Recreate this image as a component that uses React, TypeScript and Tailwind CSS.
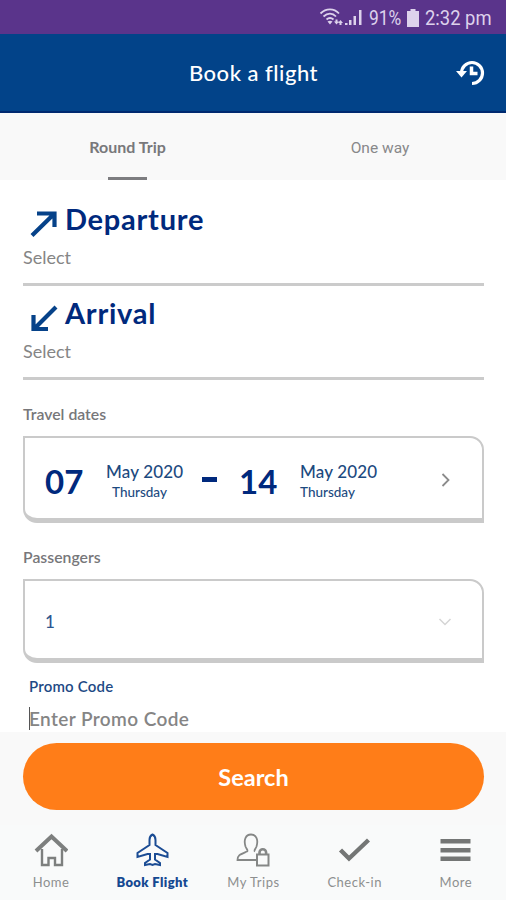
import type { ReactNode } from "react";
import clsx from "clsx";

const StatusBar = () => (
  <div className="flex h-[34px] shrink-0 items-center bg-[#5a348b] pt-px pl-[319px] font-['Roboto'] text-[20px] text-[#ddd2ec]">
    <svg width="44" height="22" viewBox="0 0 44 22" fill="none" className="shrink-0">
      <g stroke="currentColor" strokeWidth="1.8">
        <path d="M1.500 6.500C7 1 15 1 20 6.500" />
        <path d="M4.500 9.500C8.500 5.700 13.500 5.700 17 9.500" />
        <path d="M7.500 12.500C10 10.400 12 10.400 14.500 12.500" />
      </g>
      <path d="M11 17.500L8.500 14.500Q11 12.800 13.500 14.500Z" fill="currentColor" />
      <path d="M16.500 12.500h2v2h1.500l-2.500 3-2.500-3h1.500zM20.500 18v-2H19l2.500-3 2.500 3h-1.500v2z" fill="currentColor" />
      <path d="M26 16h2.500v2H26zM30 13h2.500v5H30zM34.500 9H37v9h-2.500zM40 3h2.500v15H40z" fill="currentColor" />
    </svg>
    <span className="ml-[6px] w-[33px] origin-left scale-x-[0.87] whitespace-nowrap">91%</span>
    <svg width="12" height="18" viewBox="0 0 12 18" fill="currentColor" className="ml-[5px] shrink-0">
      <path d="M3.500 0h5v2H12v16H0V2h3.500z" />
    </svg>
    <span className="ml-[6px] origin-left scale-x-[0.92] whitespace-nowrap">2:32 pm</span>
  </div>
);

const Header = () => (
  <header className="flex h-[79px] shrink-0 items-center border-b-2 border-[#002a70] bg-[#024389] text-white">
    <div className="w-[70px]" />
    <h1 className="flex-1 pl-px text-center text-[22px] font-medium tracking-[0.5px]">Book a flight</h1>
    <div className="w-[70px] pl-[20px]">
      <svg width="30" height="26" viewBox="0 0 30 26" fill="none" stroke="currentColor">
        <path d="M5.500 13A10.500 10.500 0 1 1 16 23.500" strokeWidth="3.200" />
        <path d="M0 11h11l-5.500 6.500z" fill="currentColor" stroke="none" />
        <path d="M15.500 6.500v7h6" strokeWidth="3.500" />
      </svg>
    </div>
  </header>
);

const Tabs = () => (
  <div className="grid h-[67px] shrink-0 grid-cols-2 bg-[#f9f9f9] text-[#78787b]">
    <div className="flex flex-col items-center justify-between pt-[23px] pl-[2px]">
      <span className="text-[16px] leading-[22px] font-bold">Round Trip</span>
      <span className="h-[3px] w-[39px] bg-[#7d7d80]" />
    </div>
    <div className="flex justify-center pt-[24px] pl-px">
      <span className="font-['Roboto'] text-[15.5px] leading-[22px] text-[#88888a]">One way</span>
    </div>
  </div>
);

interface PlaceFieldProps {
  title: string;
  path: string;
}

const PlaceField = ({ title, path }: PlaceFieldProps) => (
  <div className="flex h-[94px] flex-col border-b-[3px] border-[#cbcbcb]">
    <div className="flex h-[48px] items-start">
      <svg width="28" height="28" viewBox="0 0 28 28" fill="none" className="mt-[17px] ml-[7px] shrink-0">
        <path d={path} stroke="#064289" strokeWidth="4.200" />
      </svg>
      <h2 className="mt-[10px] ml-[7px] text-[29px] leading-[34px] font-bold tracking-[0.75px] text-[#00297d]">
        {title}
      </h2>
    </div>
    <span className="mt-[6px] text-[18px] leading-[22px] text-[#858585]">Select</span>
  </div>
);

interface BoxProps {
  className?: string;
  children: ReactNode;
}

const Box = ({ className, children }: BoxProps) => (
  <div
    className={clsx(
      "flex items-center rounded-tr-[14px] rounded-bl-[14px] border-[2px] border-b-[5px] border-[#cacaca] bg-white",
      className
    )}
  >
    {children}
  </div>
);

const FieldLabel = ({ children }: { children: ReactNode }) => (
  <span className="text-[15.8px] leading-[20px] font-semibold text-[#77777a]">{children}</span>
);

interface TravelDateProps {
  day: string;
  indented?: boolean;
}

const TravelDate = ({ day, indented }: TravelDateProps) => (
  <>
    <span className="w-[61px] text-[33px] leading-[40px] font-bold text-[#00297d]">{day}</span>
    <div className="flex w-[78px] flex-col pt-[2px] text-[#1c4a80]">
      <span className="text-[17px] leading-[22px] font-medium tracking-[0.15px] whitespace-nowrap">May 2020</span>
      <span className={clsx("text-[13.5px] leading-[19px] font-medium", indented && "pl-[6px]")}>Thursday</span>
    </div>
  </>
);

const HomeIcon = () => (
  <svg width="34" height="34" viewBox="0 0 34 34" fill="none" stroke="#7d7f7e">
    <path d="M2 18L17.500 3.500L33 18" strokeWidth="4" />
    <path d="M8 16v16h6.500v-7h6.500v7H28V16" strokeWidth="2.400" />
  </svg>
);

const PlaneIcon = () => (
  <svg width="34" height="34" viewBox="0 0 34 34" fill="none" stroke="#1b4c94" strokeWidth="2">
    <path d="M17.500 1.500C15.300 2.500 14.500 5 14.500 7v5L2.500 20v4l10-3h2.500v5.500l-5 3.500v2l5-1 2.500 1 2.500-1 5 1v-2l-5-3.500V21h2.500l10 3v-4l-12-8V7c0-2-.8-4.500-3-5.500z" />
  </svg>
);

const TripsIcon = () => (
  <svg width="34" height="34" viewBox="0 0 34 34" fill="none" stroke="#858786" strokeWidth="1.800">
    <path d="M20 27H1.500c0-5 2.500-5.500 9.500-8.500 1.500-1-.5-2.500-1.500-5C7.500 7 9.500 1.500 15 1.500s7.500 5.500 5.500 12c-1 2.500-3 4-1.500 5" />
    <path d="M21 21.500h11.500V32.500H21z" strokeWidth="2" />
    <path d="M23.500 21v-1.500a3.300 3.300 0 0 1 6.600 0V21" strokeWidth="2.600" />
  </svg>
);

const CheckIcon = () => (
  <svg width="34" height="34" viewBox="0 0 34 34" fill="none" stroke="#747675" strokeWidth="4.400">
    <path d="M3.500 17l8.500 8.500L31.500 7" />
  </svg>
);

const MenuIcon = () => (
  <svg width="34" height="34" viewBox="0 0 34 34" fill="#747675">
    <path d="M2.500 6h30v4.500h-30zM2.500 15h30v4.500h-30zM2.500 23.500h30V28h-30z" />
  </svg>
);

const navItems = [
  { label: "Home", icon: <HomeIcon /> },
  { label: "Book Flight", icon: <PlaneIcon />, active: true },
  { label: "My Trips", icon: <TripsIcon /> },
  { label: "Check-in", icon: <CheckIcon /> },
  { label: "More", icon: <MenuIcon /> },
];

const BottomNav = () => (
  <nav className="grid h-[75px] grid-cols-5 bg-[#f9fafa]">
    {navItems.map(({ label, icon, active }) => (
      <div key={label} className="flex flex-col items-center pt-[8px]">
        {icon}
        <span
          className={clsx(
            "mt-[6px] pl-px text-[13px] leading-[18px] whitespace-nowrap",
            active ? "font-extrabold tracking-[0.4px] text-[#154891]" : "tracking-[0.5px] text-[#8d8f8f]"
          )}
        >
          {label}
        </span>
      </div>
    ))}
  </nav>
);

const App = () => (
  <div className="flex h-[900px] w-[506px] flex-col overflow-hidden bg-white font-['Lato',sans-serif]">
    <StatusBar />
    <Header />
    <Tabs />
    <main className="flex flex-1 flex-col pt-[12px] pr-[22px] pl-[23px]">
      <PlaceField title="Departure" path="M2 26.500L24 5M7 4.500h17.500V18" />
      <PlaceField title="Arrival" path="M26 4L4 26M3.500 12v14H18" />
      <div className="mt-[24px] flex h-[32px] flex-col">
        <FieldLabel>Travel dates</FieldLabel>
      </div>
      <Box className="h-[87px] pt-[5px] pl-[20px]">
        <TravelDate day="07" indented />
        <span className="mr-[17px] mb-[2px] ml-[18px] h-[5px] w-[15px] bg-[#00297d]" />
        <div className="flex items-center pl-[5px]">
          <TravelDate day="14" />
        </div>
        <svg width="10" height="14" viewBox="0 0 10 14" fill="none" className="mb-[2px] ml-[63px]">
          <path d="M1.500 1L7.500 7L1.500 13" stroke="#8b8b8b" strokeWidth="1.800" />
        </svg>
      </Box>
      <div className="mt-[24px] flex h-[32px] flex-col">
        <FieldLabel>Passengers</FieldLabel>
      </div>
      <Box className="h-[84px] justify-between pt-[5px] pr-[30px] pl-[20px]">
        <span className="text-[17px] font-medium text-[#2c568f]">1</span>
        <svg width="14" height="10" viewBox="0 0 14 10" fill="none">
          <path d="M1.500 2L7 7.500L12.500 2" stroke="#d5d5d5" strokeWidth="1.500" />
        </svg>
      </Box>
      <span className="mt-[13px] ml-[6px] text-[15px] leading-[20px] font-semibold tracking-[0.2px] text-[#1d4a85]">
        Promo Code
      </span>
      <div className="mt-[11px] ml-[6px] flex h-[23px] items-center border-l border-[#555]">
        <span className="-ml-px pt-px text-[19px] leading-[24px] font-semibold tracking-[0.4px] text-[#858585]">
          Enter Promo Code
        </span>
      </div>
    </main>
    <div className="h-[93px] shrink-0 bg-[#f9f9f9] pt-[11px] pr-[22px] pl-[23px]">
      <button className="h-[67px] w-full rounded-full bg-[#ff7d18] pt-[2px] text-[23.5px] font-bold text-white">
        Search
      </button>
    </div>
    <BottomNav />
  </div>
);

export default App;
